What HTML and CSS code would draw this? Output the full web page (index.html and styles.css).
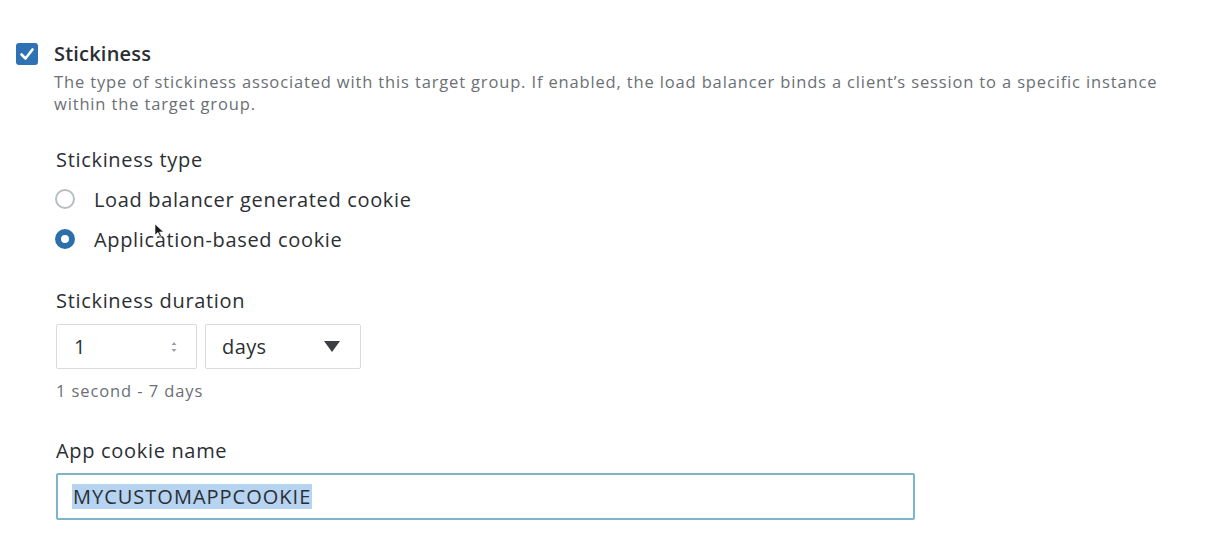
FILE: index.html
```html
<!DOCTYPE html>
<html>
<head>
    <title>Stickiness</title>
    <link rel="stylesheet" href="styles.css">
</head>
<body>
    <div class="page">
        <div class="check-row">
            <span class="checkbox">
                <svg width="22" height="22" viewBox="0 0 22 22">
                    <rect x="0" y="0" width="22" height="22" rx="3" fill="#2f72b3"/>
                    <path d="M5.5 11.5 L9.5 15.5 L16.5 6.5" fill="none" stroke="#fff" stroke-width="2.6" stroke-linecap="round" stroke-linejoin="round"/>
                </svg>
            </span>
            <div class="check-text">
                <div class="check-title">Stickiness</div>
                <div class="check-desc">The type of stickiness associated with this target group. If enabled, the load balancer binds a client’s session to a specific instance within the target group.</div>
            </div>
        </div>

        <div class="options">
            <div class="field">
                <div class="field-label">Stickiness type</div>
                <div class="radio-list">
                    <label class="radio-row">
                        <span class="radio"></span>
                        <span>Load balancer generated cookie</span>
                    </label>
                    <label class="radio-row">
                        <span class="radio checked"></span>
                        <span>Application-based cookie</span>
                    </label>
                </div>
            </div>

            <div class="field duration">
                <div class="field-label">Stickiness duration</div>
                <div class="duration-row">
                    <div class="box number-box">
                        <span>1</span>
                        <svg class="spin" width="6" height="12" viewBox="0 0 6 12">
                            <path d="M0.5 4 L3 1 L5.5 4 Z M0.5 8 L3 11 L5.5 8 Z" fill="#9aa0a6"/>
                        </svg>
                    </div>
                    <div class="box select-box">
                        <span>days</span>
                        <svg width="16" height="11" viewBox="0 0 16 11">
                            <path d="M0 0 H16 L8 11 Z" fill="#3b3f44"/>
                        </svg>
                    </div>
                </div>
                <div class="hint">1 second - 7 days</div>
            </div>

            <div class="field cookie">
                <div class="field-label">App cookie name</div>
                <div class="text-input">
                    <span class="selected">MYCUSTOMAPPCOOKIE</span>
                </div>
            </div>
        </div>

        <svg class="cursor" width="10" height="14" viewBox="0 0 10 14">
            <path d="M0 0 L0 11 L3 8.5 L5 13 L6.5 12.3 L4.6 8 L8.5 8 Z" fill="#1a1a1a" stroke="#fff" stroke-width="0.6"/>
        </svg>
    </div>
</body>
</html>
```

FILE: styles.css
```css
body {
    font-family: "Open Sans", "Noto Sans", Arial, sans-serif;
    margin: 0;
    padding: 0;
    background: #fff;
    color: #2b2f33;
}
.page {
    position: relative;
    width: 1210px;
    height: 540px;
    padding: 42px 0 0 16px;
    box-sizing: border-box;
    overflow: hidden;
}
.check-row {
    display: flex;
    gap: 16px;
}
.checkbox {
    display: block;
    width: 22px;
    height: 22px;
    margin-top: 1px;
}
.check-title {
    font-size: 20px;
    line-height: 24px;
    font-weight: 600;
    letter-spacing: 0.2px;
    color: #2b2f33;
}
.check-desc {
    margin-top: 5px;
    width: 1130px;
    font-size: 16.5px;
    line-height: 22px;
    letter-spacing: 0.85px;
    color: #6b7075;
}
.options {
    padding-left: 40px;
}
.field-label {
    font-size: 20px;
    line-height: 24px;
    letter-spacing: 0.68px;
    color: #2b2f33;
}
.field:first-child {
    margin-top: 33px;
}
.radio-list {
    margin-top: 7px;
    display: flex;
    flex-direction: column;
}
.radio-row {
    display: flex;
    align-items: center;
    height: 40px;
    gap: 19px;
    font-size: 20px;
    letter-spacing: 0.65px;
    color: #2b2f33;
}
.radio {
    width: 20px;
    height: 20px;
    box-sizing: border-box;
    border-radius: 50%;
    border: 2px solid #b7bec2;
    margin-left: -1px;
}
.radio.checked {
    border: 6px solid #2b6fab;
}
.duration {
    margin-top: 30px;
}
.duration-row {
    display: flex;
    gap: 8px;
    margin-top: 11px;
}
.box {
    height: 45px;
    box-sizing: border-box;
    border: 1px solid #d8dcde;
    border-radius: 2px;
    display: flex;
    align-items: center;
    justify-content: space-between;
    font-size: 20px;
    letter-spacing: 0.4px;
    color: #2b2f33;
}
.number-box {
    width: 141px;
    padding: 0 19px 0 17px;
}
.select-box {
    width: 156px;
    padding: 0 20px 0 16px;
}
.hint {
    margin-top: 12px;
    font-size: 16.5px;
    line-height: 20px;
    letter-spacing: 0.9px;
    color: #6b7075;
}
.cookie {
    margin-top: 38px;
}
.text-input {
    margin-top: 10px;
    width: 859px;
    height: 47px;
    box-sizing: border-box;
    border: 2px solid #7db5c8;
    border-radius: 2px;
    display: flex;
    align-items: center;
    padding-left: 14px;
    font-size: 20px;
    letter-spacing: 1px;
    color: #2b2f33;
}
.selected {
    background: #b6d3f2;
    line-height: 25px;
    padding: 0 1px;
}
.cursor {
    position: absolute;
    left: 155px;
    top: 224px;
}
```
